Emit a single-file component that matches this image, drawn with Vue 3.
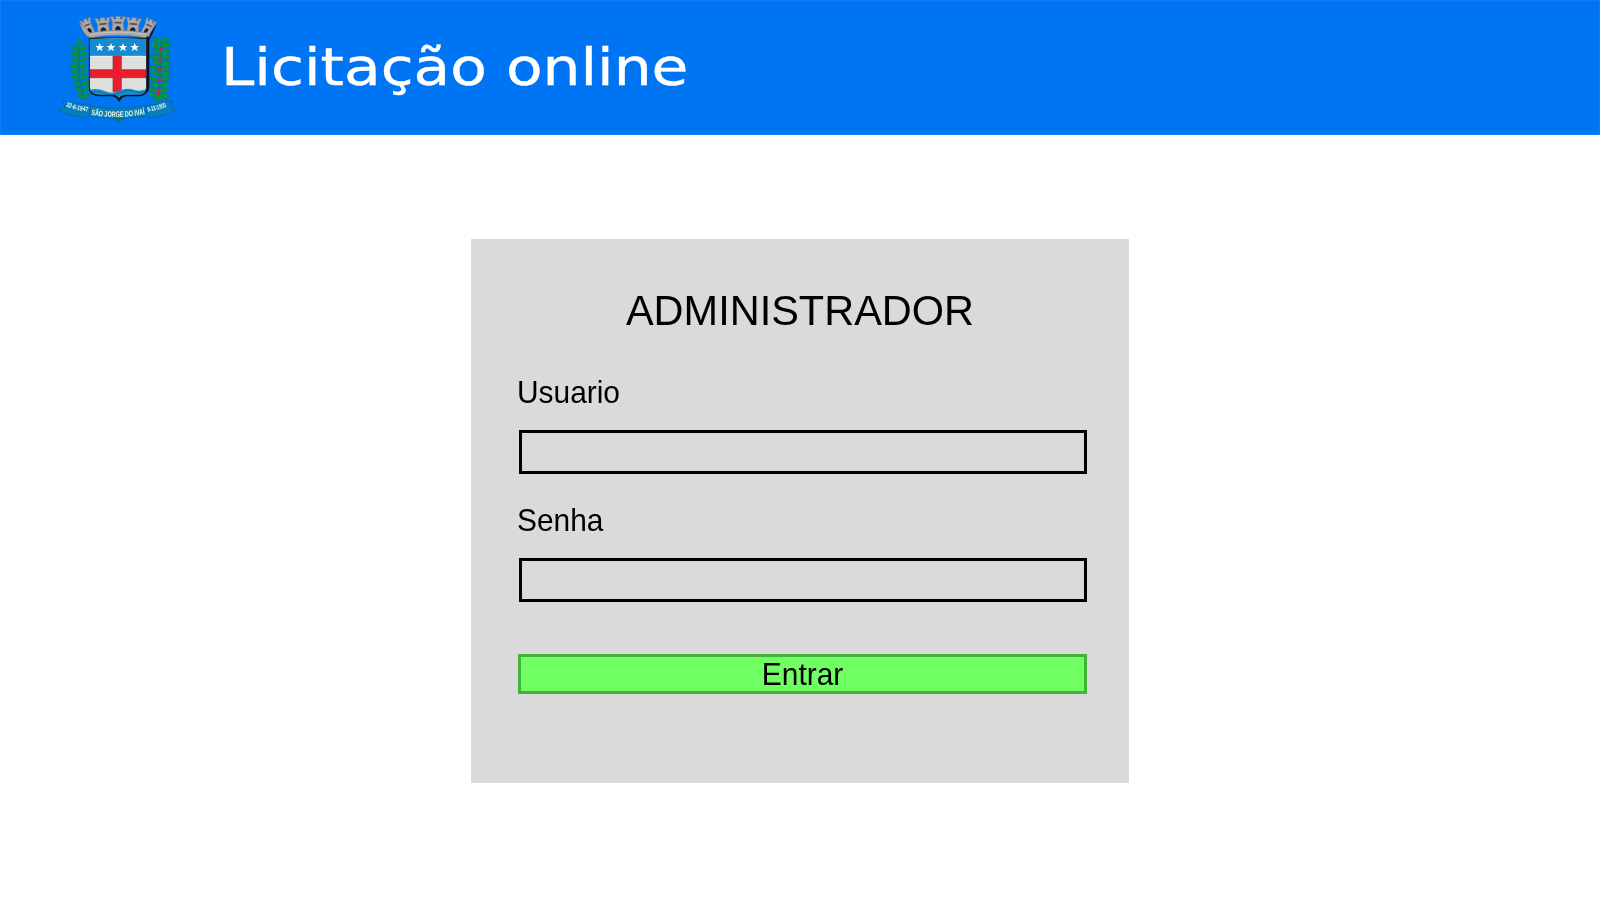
<script setup>
import { ref } from 'vue'

const usuario = ref('')
const senha = ref('')

const leftLeaves = [
  [88, 113, 80], [77, 130, 25], [99, 130, -25], [74, 147, 20], [101, 147, -20],
  [75, 165, 20], [99, 165, -20], [72, 183, 20], [98, 183, -20], [74, 201, 25],
  [99, 201, -20], [76, 219, 25], [102, 217, -25], [81, 237, 25], [106, 233, -30],
  [87, 254, 30], [110, 250, -30], [92, 273, 30], [108, 272, -30],
]
const rightLeaves = [
  [322, 107, 25], [345, 106, -25], [318, 123, 15], [348, 121, -15],
  [322, 139, 25], [345, 140, -20], [316, 157, 20], [347, 156, -20],
  [321, 172, 25], [346, 174, -20], [314, 188, 20], [347, 190, -15],
  [318, 205, 20], [345, 206, -20], [312, 222, 20], [344, 222, -20],
  [316, 239, 15], [342, 239, -20], [309, 255, 20], [341, 256, -15],
  [314, 272, 15], [343, 273, 15], [327, 281, -20],
]
const berries = [[332, 134], [330, 166], [328, 196], [329, 226], [326, 257], [325, 265]]
const towers = [
  [112, 62, 0.75, -22], [159, 59, 1, -5], [204, 55, 1, 0], [250, 59, 1, 6], [296, 63, 0.75, 24],
]
const stars = [149, 183, 219, 254]
</script>

<template>
  <div class="page">
    <header class="banner">
      <svg class="crest" viewBox="0 0 420 390" aria-label="São Jorge do Ivaí">
        <g fill="none" stroke="#08744b" stroke-width="3">
          <path d="M88 108Q82 175 88 225Q93 265 108 286" />
          <path d="M333 104Q332 200 326 290" />
        </g>
        <g fill="#079447" stroke="#07705c" stroke-width="1">
          <ellipse v-for="(l, i) in leftLeaves" :key="i" rx="12" ry="6" :transform="`translate(${l[0]} ${l[1]}) rotate(${l[2]})`" />
          <ellipse v-for="(l, i) in rightLeaves" :key="'r' + i" rx="15" ry="6.5" :transform="`translate(${l[0]} ${l[1]}) rotate(${l[2]})`" />
        </g>
        <circle v-for="(b, i) in berries" :key="'b' + i" :cx="b[0]" :cy="b[1]" r="6" fill="#cf1f55" />

        <path d="M119 98H288L321 54L307 88L298 105V247Q294 270 270 274H229Q214 276 208 292Q201 277 185 274H145Q122 272 117 256Z" fill="#0b1726" />
        <g v-for="(t, i) in towers" :key="'t' + i" :transform="`translate(${t[0]} ${t[1]}) rotate(${t[3]}) scale(${t[2]} 1)`">
          <path d="M-23-20H-13V-13H-7V-21H7V-13H13V-20H23L16-1L19 29H-19L-16-1Z" fill="#aaa8aa" stroke="#77757b" stroke-width="1.5" />
          <path d="M-8 25V14Q0 2 8 14V25Z" fill="#171b25" />
          <path d="M-11-2H11" stroke="#55545e" stroke-width="5" />
        </g>
        <path d="M88 55L107 70L119 83Q205 68 289 83L302 68L320 53L302 82L287 98Q204 84 121 98Q105 91 99 77Z" fill="#aaa8aa" stroke="#77757b" stroke-width="1.5" />
        <path d="M119 89Q204 73 290 89" fill="none" stroke="#c5c2c2" stroke-width="3" />

        <path d="M118 101Q204 96 290 101V248Q288 266 268 269H148Q121 267 118 248Z" fill="#dedede" stroke="#101722" stroke-width="3" />
        <path d="M120 102Q204 98 288 102V153H120Z" fill="#168bd3" />
        <path d="M120 154H288" stroke="#edf2f3" stroke-width="3" />
        <path d="M189 153H214V194H288V218H214V260H189V218H120V194H189Z" fill="#ec1c2b" stroke="#71363c" stroke-width="2" />
        <path d="M120 254Q142 248 166 259Q188 268 207 257Q232 246 253 255Q272 260 288 252Q286 266 268 269H225Q211 271 207 280Q201 270 187 269H148Q124 266 120 254Z" fill="#168fce" />
        <path d="M123 261Q143 256 164 265Q188 274 210 263Q235 252 254 260Q270 265 284 260" fill="none" stroke="#0a5799" stroke-width="2" />
        <path v-for="x in stars" :key="x" :transform="`translate(${x} 127)`" d="M0-13L3.5-4H13L5.5 2L8.5 12L0 6L-8.5 12L-5.5 2L-13-4H-3.5Z" fill="#fff" />

        <path d="M184 344L204 335L225 343L210 345L221 357L202 349L190 352L198 343Z" fill="#087e58" />
        <path d="M36 285L51 293L62 289Q92 300 123 300L115 338Q65 335 24 315L46 307Z" fill="#087fbd" stroke="#0866a0" stroke-width="2.5" />
        <path d="M369 285L358 293L348 286Q321 300 287 302L295 338Q346 332 382 312L359 306Z" fill="#087fbd" stroke="#0866a0" stroke-width="2.5" />
        <path d="M121 303Q205 318 289 303L284 333Q205 345 123 335Z" fill="#1180b0" stroke="#0866a0" stroke-width="2.5" />
        <path id="ribbon-left" d="M47 304Q78 317 120 320" fill="none" />
        <path id="ribbon-mid" d="M123 330Q204 343 288 327" fill="none" />
        <path id="ribbon-right" d="M293 320Q325 315 354 304" fill="none" />
        <g class="ribbon-text">
          <text class="small"><textPath href="#ribbon-left" textLength="69" lengthAdjust="spacingAndGlyphs">22-6-1947</textPath></text>
          <text><textPath href="#ribbon-mid" textLength="163" lengthAdjust="spacingAndGlyphs">SÃO JORGE DO IVAÍ</textPath></text>
          <text class="small"><textPath href="#ribbon-right" textLength="58" lengthAdjust="spacingAndGlyphs">9-12-1955</textPath></text>
        </g>
      </svg>
      <h1 class="brand">Licitação online</h1>
    </header>

    <main class="content">
      <form class="panel" @submit.prevent>
        <h2 class="heading">ADMINISTRADOR</h2>
        <label class="label" for="usuario">Usuario</label>
        <input id="usuario" v-model="usuario" class="field" type="text" />
        <label class="label second" for="senha">Senha</label>
        <input id="senha" v-model="senha" class="field" type="password" />
        <button class="submit" type="submit"><span>Entrar</span></button>
      </form>
    </main>
  </div>
</template>

<style>
html, body { margin: 0; background: #fff; }
</style>

<style scoped>
.page {
  width: 1600px;
  height: 900px;
  overflow: hidden;
  background: #fff;
  color: #000;
  font-family: "Liberation Sans", Arial, sans-serif;
}
.banner {
  box-sizing: border-box;
  display: flex;
  height: 135px;
  padding: 5px 0 0 50px;
  background: #0075f4;
  box-shadow: inset 0 0 0 1px #107ef3;
}
.crest { flex: none; width: 140px; height: 130px; filter: blur(0.3px); }
.ribbon-text {
  fill: #e3f6ef;
  font-family: "Liberation Sans", Arial, sans-serif;
  font-size: 24px;
  font-weight: 700;
}
.ribbon-text .small { font-size: 20px; }
.brand {
  margin: 32px 0 0 31px;
  color: #fff;
  font-family: "DejaVu Sans", Verdana, sans-serif;
  font-size: 52px;
  font-weight: 400;
  line-height: 60px;
  white-space: nowrap;
  -webkit-text-stroke: 0.4px #fff;
  transform: scaleX(1.151);
  transform-origin: left;
}
.content { display: flex; padding: 104px 0 0 471px; }
.panel {
  box-sizing: border-box;
  display: flex;
  flex-direction: column;
  width: 658px;
  height: 544px;
  padding: 48px 42px 0 47px;
  background: #dadada;
}
.heading {
  margin: 0 0 42px -5px;
  font-size: 43px;
  font-weight: 400;
  line-height: 46px;
  text-align: center;
  transform: scaleX(0.965);
}
.label {
  height: 36px;
  margin-left: -1px;
  font-size: 30.5px;
  line-height: 34px;
  transform: scaleX(0.98);
  transform-origin: left;
}
.second { margin-top: 29px; }
.field {
  box-sizing: border-box;
  height: 44px;
  margin: 19px 0 0 1px;
  padding: 0 8px;
  border: 3px solid #000;
  border-radius: 0;
  outline: 0;
  background: transparent;
  font: 24px "Liberation Sans", Arial, sans-serif;
}
.submit {
  box-sizing: border-box;
  height: 40px;
  margin-top: 52px;
  padding: 1px 0 0;
  border: 3px solid #41b437;
  border-radius: 0;
  background: #6fff62;
  color: #000;
  font: 30.5px/33px "Liberation Sans", Arial, sans-serif;
}
.submit span { display: inline-block; transform: scaleX(0.98); }
</style>
